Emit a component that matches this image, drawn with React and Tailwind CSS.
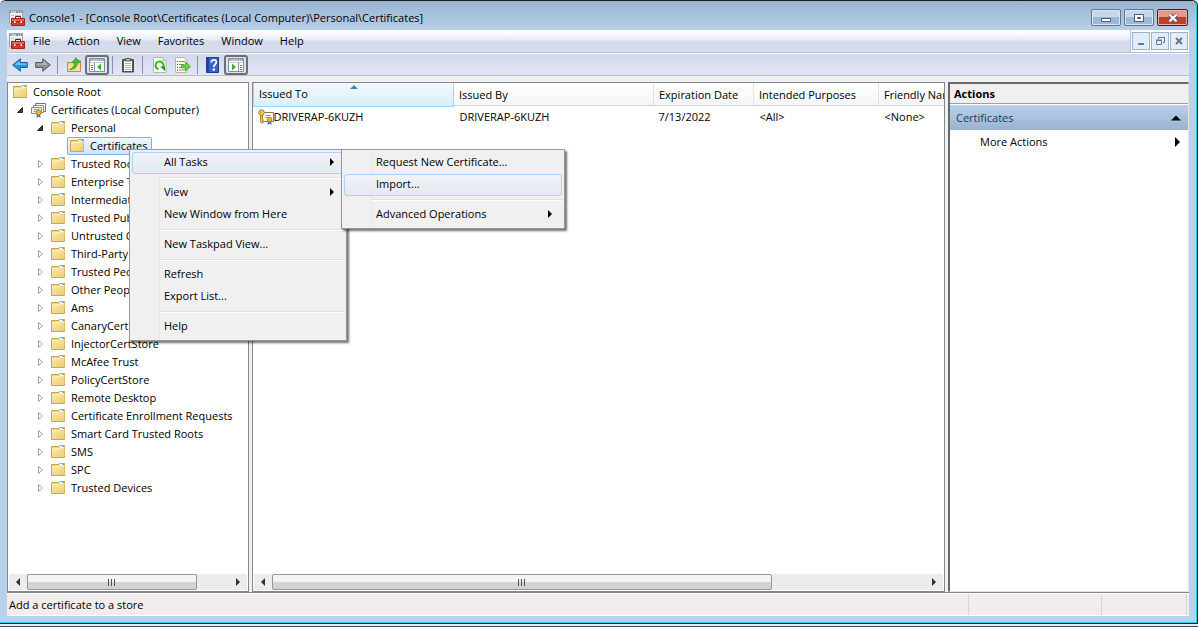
import React, { useState } from "react";
import clsx from "clsx";

const treeItems = [
    { label: "Console Root", level: 0 },
    { label: "Certificates (Local Computer)", level: 1, open: true, icon: "cert" },
    { label: "Personal", level: 2, open: true },
    { label: "Certificates", level: 3 },
    { label: "Trusted Root Certification Authorities", level: 2 },
    { label: "Enterprise Trust", level: 2 },
    { label: "Intermediate Certification Authorities", level: 2 },
    { label: "Trusted Publishers", level: 2 },
    { label: "Untrusted Certificates", level: 2 },
    { label: "Third-Party Root Certification Authorities", level: 2 },
    { label: "Trusted People", level: 2 },
    { label: "Other People", level: 2 },
    { label: "Ams", level: 2 },
    { label: "CanaryCertStore", level: 2 },
    { label: "InjectorCertStore", level: 2 },
    { label: "McAfee Trust", level: 2 },
    { label: "PolicyCertStore", level: 2 },
    { label: "Remote Desktop", level: 2 },
    { label: "Certificate Enrollment Requests", level: 2 },
    { label: "Smart Card Trusted Roots", level: 2 },
    { label: "SMS", level: 2 },
    { label: "SPC", level: 2 },
    { label: "Trusted Devices", level: 2 },
];

const indents = ["pl-0.5", "pl-2", "pl-7", "pl-[59px]"];

const contextMenu = [
    ["All Tasks"],
    ["View", "New Window from Here"],
    ["New Taskpad View..."],
    ["Refresh", "Export List..."],
    ["Help"],
];

const tasksMenu = [["Request New Certificate...", "Import..."], ["Advanced Operations"]];

const withArrow = ["All Tasks", "View", "Advanced Operations"];

function FolderIcon() {
    return (
        <svg className="w-4 h-4 shrink-0" viewBox="0 0 16 16">
            <defs>
                <linearGradient id="folder" x1="0" y1="0" x2="1" y2="1">
                    <stop offset="0" stopColor="#fbe9a9" />
                    <stop offset="1" stopColor="#eecb74" />
                </linearGradient>
            </defs>
            <path d="M.5 2.500h7l1-1h5v12h-13z" fill="#f0d383" stroke="#cfa24c" />
            <path d="M9 2h4v1.500H9z" fill="#fff" />
            <path d="M11.500 2H13v1h-1.500z" fill="#5b9bd5" />
            <path d="M1 4.500h7l1-1h4.500V13H1z" fill="url(#folder)" />
            <path d="M1 4.700h7l1-1h4.500" fill="none" stroke="#fff8d8" strokeWidth=".8" />
        </svg>
    );
}

function CertStoreIcon() {
    return (
        <svg className="w-4 h-4 shrink-0" viewBox="0 0 16 16">
            <path d="M4.500 1.500h10v8h-10z" fill="#fff" stroke="#77715f" />
            <path d="M2.500 3.500h10v7h-10z" fill="#fff" stroke="#8a8a8a" />
            <path d="M.5 5.500h10v6H.5z" fill="#f4f5fb" stroke="#8c8c8c" />
            <path d="M2.500 7.500h6M2.500 9.500h3" stroke="#8a92c8" />
            <path d="M6 11l-.5 5 2-1.500L9.500 16 9 11z" fill="#2f6fd0" />
            <circle cx="7.500" cy="10.500" r="2.500" fill="#f5b42c" stroke="#b97a10" strokeWidth=".8" />
        </svg>
    );
}

function CertKeyIcon() {
    return (
        <svg className="w-4 h-4 shrink-0" viewBox="0 0 16 16">
            <path d="M4.500 3.500h11v9h-11z" fill="#fff" stroke="#8a7550" />
            <path d="M7 6.500h6M7 8.500h3" stroke="#9298d0" />
            <path d="M10 11l-.5 5 2-1.500 2 1.500-.5-5z" fill="#2f6fd0" />
            <circle cx="11.500" cy="10.500" r="2.400" fill="#f5b42c" stroke="#b97a10" strokeWidth=".8" />
            <path d="M2.500 5v8l1.500 1.500L5.500 13l-1-1 1-1-1-1V5z" fill="#f3c35c" stroke="#a8721c" strokeWidth=".8" />
            <circle cx="3.500" cy="3.500" r="2.800" fill="#f8cd6e" stroke="#a8721c" strokeWidth=".9" />
            <circle cx="3.200" cy="2.800" r="1" fill="#fff" stroke="#a8721c" strokeWidth=".5" />
        </svg>
    );
}

function ConsoleIcon() {
    return (
        <svg className="w-4 h-4 shrink-0" viewBox="0 0 16 16">
            <path d="M.5.5h13v13H.5z" fill="#eef2f5" stroke="#98a3ad" />
            <path d="M1 1h12v2H1z" fill="#7f8c98" />
            <path d="M2 2h5M9 2h1M11 2h1" stroke="#fff" />
            <path d="M2 5h3v1H2zM6 5h6v1H6zM2 7.500h2v1H2z" fill="#b4bec7" />
            <path d="M6.500 8V6.500h5V8" fill="none" stroke="#5a2320" />
            <path d="M2.500 8.500h13v7h-13z" fill="#d8372e" stroke="#a8211c" />
            <path d="M3 9h12v2H3z" fill="#ea6558" />
            <path d="M3 11.500h12" stroke="#a8211c" />
            <path d="M5 11h1.500v2H5zM11.500 11H13v2h-1.500z" fill="#f2eae6" />
        </svg>
    );
}

function ArrowIcon({ forward }) {
    return (
        <svg className="w-4 h-4" viewBox="0 0 16 16">
            {forward ? (
                <>
                    <path d="M.7 5.500h7V1.800L15.300 8l-7.600 6.200v-3.700h-7z" fill="#8e9195" stroke="#55585c" />
                    <path d="M1.500 6.500h7V4l4.500 3.700H1.500z" fill="#b4b7ba" />
                </>
            ) : (
                <>
                    <path d="M15.300 5.500h-7V1.800L.7 8l7.600 6.200v-3.700h7z" fill="#2496e0" stroke="#17609e" />
                    <path d="M14.500 6.500h-7V4L3 7.700h11.500z" fill="#7fd0f8" />
                </>
            )}
        </svg>
    );
}

function UpFolderIcon() {
    return (
        <svg className="w-4 h-4" viewBox="0 0 16 16">
            <path d="M1.500 5.500h5l1.500-2h6.500v11h-13z" fill="#f1cf79" stroke="#bd9140" />
            <path d="M2 7.500h12v6.500H2z" fill="#f9e197" />
            <path d="M3.500 12.500c3.500-1 5-3.500 5-7H6.200L10 .8l4 4.700h-2.500c-.3 4.500-3 7-8 7z" fill="#4cc335" stroke="#238a1c" strokeWidth=".7" />
        </svg>
    );
}

function PaneIcon({ right }) {
    return (
        <svg className="w-4 h-4" viewBox="0 0 16 16">
            <path d="M.5 1.500h15v13H.5z" fill="#fff" stroke="#858e98" />
            <path d="M1 2h14v2H1z" fill="#8f9ba6" />
            <path d="M2 3h8" stroke="#dde3e8" />
            <path d="M11 3h1M13 3h1" stroke="#fff" />
            <path d="M1 5.500h14" stroke="#c3cad0" />
            {right ? (
                <>
                    <path d="M10.500 6v8" stroke="#858e98" />
                    <path d="M12 8.500h2M12 10.500h2M12 12.500h2" stroke="#4f82b8" />
                    <path d="M4 6.500v7L8 10z" fill="#35b128" />
                </>
            ) : (
                <>
                    <path d="M5.500 6v8" stroke="#858e98" />
                    <path d="M2 8.500h2M2 10.500h2M2 12.500h2" stroke="#4f82b8" />
                    <path d="M12 6.500v7L8 10z" fill="#35b128" />
                </>
            )}
        </svg>
    );
}

function ClipboardIcon() {
    return (
        <svg className="w-4 h-4" viewBox="0 0 16 16">
            <path d="M2.500 2.500h11v12.500h-11z" fill="#5d5d5d" stroke="#4d4d4d" />
            <path d="M4 4h8v10H4z" fill="#fff" />
            <path d="M5 6.500h6M5 8.500h6M5 10.500h6M5 12.500h6" stroke="#aab4bd" />
            <path d="M5.500 1.500h5v2.500h-5z" fill="#bdbdbd" stroke="#555" />
        </svg>
    );
}

function RefreshIcon() {
    return (
        <svg className="w-4 h-4" viewBox="0 0 16 16">
            <path d="M1.500.5h9.500l3 3v12H1.500z" fill="#fafbf5" stroke="#b5b7a8" />
            <path d="M11 .5v3h3" fill="#e2e4d6" stroke="#b5b7a8" />
            <path d="M6.500 12.300a4 4 0 1 1 4.200-1.300" fill="none" stroke="#35b52c" strokeWidth="2" />
            <path d="M8 9.500h5v4.500z" fill="#249c20" />
        </svg>
    );
}

function ExportIcon() {
    return (
        <svg className="w-4 h-4" viewBox="0 0 16 16">
            <path d="M.5.5h8.500l3 3v12H.5z" fill="#fffdf0" stroke="#c0b895" />
            <path d="M2 4.500h1M2 7.500h1M2 10.500h1M2 13h1" stroke="#555" />
            <path d="M4 4.500h6M4 7.500h5M4 10.500h4M4 13h6" stroke="#8a8a80" />
            <path d="M6.500 8h4V5l5 4.500-5 4.500v-3h-4z" fill="#6ed34c" stroke="#36a128" strokeWidth=".8" />
        </svg>
    );
}

function HelpIcon() {
    return (
        <svg className="w-4 h-4" viewBox="0 0 16 16">
            <path d="M1.500.5h12v15h-12z" fill="#3565c8" stroke="#1d3c8c" />
            <path d="M2 1h2v14H2z" fill="#1f459e" />
            <path d="M6.300 5.500c0-3.500 5-3.200 5-.2 0 2-2.500 2.200-2.500 4.700" fill="none" stroke="#fff" strokeWidth="1.800" />
            <circle cx="8.800" cy="12.500" r="1.200" fill="#fff" />
        </svg>
    );
}

function Triangle({ className, dir = "right" }) {
    const shapes = {
        right: "M2 0v8l4-4z",
        left: "M6 0v8L2 4z",
        up: "M0 6h8L4 2z",
    };
    return (
        <svg className={clsx("w-2 h-2 shrink-0", className)} viewBox="0 0 8 8">
            <path d={shapes[dir]} fill="currentColor" />
        </svg>
    );
}

function Expander({ open }) {
    return (
        <svg className="w-2 h-2 shrink-0" viewBox="0 0 8 8">
            {open ? (
                <path d="M6.500 1.500v5h-5z" fill="#404040" stroke="#262626" />
            ) : (
                <path d="M2.500.5v7l4-3.500z" fill="#fff" stroke="#a0a0a0" />
            )}
        </svg>
    );
}

function TitleBar() {
    const button =
        "h-[17px] flex items-center justify-center rounded-[2px] border border-[#5c7590] bg-linear-to-b from-[#c6d9ec] from-45% to-[#9db9d6] to-50% shadow-[inset_0_0_0_1px_#d9e6f3]";
    return (
        <header className="h-[29px] flex items-center pt-1 pl-[2px] pr-px shrink-0">
            <ConsoleIcon />
            <h1 className="ml-1 flex-1 truncate">
                Console1 - [Console Root\Certificates (Local Computer)\Personal\Certificates]
            </h1>
            <div className="flex gap-[3px]">
                <button aria-label="Minimize" className={clsx(button, "w-[30px]")}>
                    <svg className="w-3 h-3" viewBox="0 0 12 12">
                        <path d="M1.500 6.500h9v3h-9z" fill="#fff" stroke="#535666" />
                    </svg>
                </button>
                <button aria-label="Maximize" className={clsx(button, "w-[30px]")}>
                    <svg className="w-3 h-3" viewBox="0 0 12 12">
                        <path d="M1.500 2.500h9v7h-9z" fill="#fff" stroke="#535666" />
                        <path d="M4.500 5.500h3v1h-3z" fill="#8da4bc" stroke="#535666" />
                    </svg>
                </button>
                <button
                    aria-label="Close"
                    className="w-[31px] h-[17px] flex items-center justify-center rounded-[2px] border border-[#531b22] bg-linear-to-b from-[#e39a8c] from-45% to-[#c13e28] to-50% shadow-[inset_0_0_0_1px_#eab1a5]"
                >
                    <svg className="w-3 h-3" viewBox="0 0 12 12">
                        <path d="M2.500 2.500l7 7M9.500 2.500l-7 7" stroke="#535666" strokeWidth="4" />
                        <path d="M2.500 2.500l7 7M9.500 2.500l-7 7" stroke="#fff" strokeWidth="2.400" />
                    </svg>
                </button>
            </div>
        </header>
    );
}

function MenuBar() {
    const child =
        "w-[18px] h-[18px] flex items-center justify-center border border-[#9db3c8] bg-[#e1eefa] text-[#67788a]";
    return (
        <div className="h-[23px] flex items-center shrink-0 pl-[2px] border-b border-[#b6bccc] bg-linear-to-b from-white from-10% via-[#e6eaf5] via-45% to-[#d5daed] to-50%">
            <ConsoleIcon />
            <nav className="flex flex-1">
                {["File", "Action", "View", "Favorites", "Window", "Help"].map((name) => (
                    <button key={name} className="pl-2 pr-[9px]">
                        {name}
                    </button>
                ))}
            </nav>
            <div className="h-full flex items-center gap-px pl-px pr-px border-l border-[#b6bccc] bg-white">
                <button aria-label="Minimize console" className={child}>
                    <svg className="w-3 h-3" viewBox="0 0 12 12">
                        <path d="M3 9h6" stroke="currentColor" strokeWidth="2" />
                    </svg>
                </button>
                <button aria-label="Restore console" className={child}>
                    <svg className="w-3 h-3" viewBox="0 0 12 12">
                        <path d="M4.500 4V2.500h6v5H9M4 2.500h7" fill="none" stroke="currentColor" />
                        <path d="M2.500 5.500h5v4h-5zM2 5h6" fill="none" stroke="currentColor" />
                    </svg>
                </button>
                <button aria-label="Close console" className={child}>
                    <svg className="w-3 h-3" viewBox="0 0 12 12">
                        <path d="M3 3l6 6M9 3l-6 6" stroke="currentColor" strokeWidth="2" />
                    </svg>
                </button>
            </div>
        </div>
    );
}

function ToolButton({ label, pressed, children }) {
    return (
        <button
            aria-label={label}
            className={clsx(
                "h-5 flex items-center justify-center",
                pressed ? "w-6 rounded-[3px] border-2 border-[#6b6f7a] bg-[#dfe3ee]" : "w-[23px]"
            )}
        >
            {children}
        </button>
    );
}

function ToolBar() {
    const divider = <span className="w-px h-[18px] mx-[3px] bg-[#8d92a3]" />;
    return (
        <div className="h-[23px] flex items-center shrink-0 pl-px pt-px border-t border-b border-t-white border-b-[#b6bccc] bg-linear-to-b from-[#d3d9ed] to-[#e1e6f6]">
            <ToolButton label="Back"><ArrowIcon /></ToolButton>
            <ToolButton label="Forward"><ArrowIcon forward /></ToolButton>
            {divider}
            <span className="w-px" />
            <ToolButton label="Up one level"><UpFolderIcon /></ToolButton>
            <ToolButton label="Show/Hide Console Tree" pressed><PaneIcon /></ToolButton>
            {divider}
            <ToolButton label="Paste"><ClipboardIcon /></ToolButton>
            {divider}
            <span className="w-0.5" />
            <ToolButton label="Refresh"><RefreshIcon /></ToolButton>
            <ToolButton label="Export List"><ExportIcon /></ToolButton>
            {divider}
            <ToolButton label="Help"><HelpIcon /></ToolButton>
            <ToolButton label="Show/Hide Action Pane" pressed><PaneIcon right /></ToolButton>
        </div>
    );
}

function ScrollBar({ thumb }) {
    return (
        <div className="h-4 flex items-stretch shrink-0 mx-px mb-px bg-[#ececec] text-[#303030]">
            <button aria-label="Scroll left" className="w-[18px] flex items-center justify-center">
                <Triangle dir="left" />
            </button>
            <div className="flex-1">
                <div
                    className={clsx(
                        "h-4 flex items-center justify-center gap-px border border-[#979797] rounded-[2px] bg-linear-to-b from-[#f4f4f4] from-45% to-[#d2d2d5] to-55%",
                        thumb
                    )}
                >
                    <span className="w-0.5 h-[7px] border-l border-[#505050]" />
                    <span className="w-0.5 h-[7px] border-l border-[#505050]" />
                    <span className="w-0.5 h-[7px] border-l border-[#505050]" />
                </div>
            </div>
            <button aria-label="Scroll right" className="w-[18px] flex items-center justify-center">
                <Triangle />
            </button>
        </div>
    );
}

function TreePane({ selected, onSelect }) {
    return (
        <section className="w-[242px] shrink-0 flex flex-col border border-[#828790] bg-white">
            <ul className="flex-1 overflow-hidden">
                {treeItems.map((item, index) => (
                    <li key={`${item.level}-${item.label}`} className={clsx("h-[18px] flex items-center", indents[item.level])}>
                        {(item.level === 1 || item.level === 2) && (
                            <span className="w-3 flex shrink-0">
                                <Expander open={item.open} />
                            </span>
                        )}
                        <button
                            onClick={() => onSelect(index)}
                            className={clsx(
                                "h-[18px] flex items-center gap-1 pl-0.5 pr-[3px] whitespace-nowrap rounded-[2px] border",
                                selected === index
                                    ? "border-[#84acdd] bg-linear-to-b from-[#f1f7fe] to-[#cfe3fb]"
                                    : "border-transparent"
                            )}
                        >
                            {item.icon === "cert" ? <CertStoreIcon /> : <FolderIcon />}
                            {item.label}
                        </button>
                    </li>
                ))}
            </ul>
            <ScrollBar thumb="w-[170px]" />
        </section>
    );
}

function ListPane() {
    const head = "h-[23px] px-[5px] text-left font-normal border-r border-[#dfe3e8]";
    return (
        <section className="flex-1 min-w-0 flex flex-col border border-[#828790] bg-white">
            <div className="flex-1 overflow-hidden">
                <table className="w-full table-fixed whitespace-nowrap">
                    <colgroup>
                        <col className="w-[200px]" />
                        <col className="w-[200px]" />
                        <col className="w-[100px]" />
                        <col className="w-[125px]" />
                        <col />
                    </colgroup>
                    <thead>
                        <tr className="bg-linear-to-b from-white to-[#f4f5f7] shadow-[inset_0_-1px_0_#d5d5d5]">
                            <th className="relative h-[23px] px-[5px] text-left font-normal border border-t-0 border-[#96d9f9] bg-linear-to-b from-[#f2f9fc] to-[#d9eef9]">
                                Issued To
                                <Triangle dir="up" className="absolute top-0 left-1/2 -translate-x-1/2 text-[#4d87ab]" />
                            </th>
                            <th className={head}>Issued By</th>
                            <th className={head}>Expiration Date</th>
                            <th className={head}>Intended Purposes</th>
                            <th className="h-[23px] pl-[5px] text-left font-normal overflow-hidden">Friendly Name</th>
                        </tr>
                    </thead>
                    <tbody>
                        <tr className="h-[22px]">
                            <td className="pl-1">
                                <span className="flex items-center">
                                    <CertKeyIcon />
                                    DRIVERAP-6KUZH
                                </span>
                            </td>
                            <td className="px-[6px]">DRIVERAP-6KUZH</td>
                            <td className="px-[5px]">7/13/2022</td>
                            <td className="px-[6px]">&lt;All&gt;</td>
                            <td className="px-[6px]">&lt;None&gt;</td>
                        </tr>
                    </tbody>
                </table>
            </div>
            <ScrollBar thumb="w-[500px]" />
        </section>
    );
}

function ActionsPane() {
    return (
        <aside className="w-[241px] shrink-0 border-t-2 border-l-2 border-r border-b border-t-[#696969] border-l-[#696969] border-r-[#e3e3e3] border-b-[#e3e3e3] bg-white">
            <h2 className="h-5 flex items-center px-1 font-bold border-b border-[#a0a0a0] bg-[#f0f0f0]">Actions</h2>
            <button className="mt-px w-full h-[25px] flex items-center justify-between pl-[6px] pr-[7px] text-[#1e395b] bg-linear-to-b from-[#b9d1ea] to-[#99b4d1]">
                Certificates
                <svg className="w-[10px] h-[10px] text-black" viewBox="0 0 10 10">
                    <path d="M0 7.500h10L5 2.500z" fill="currentColor" />
                </svg>
            </button>
            <button className="w-full h-6 flex items-center justify-between pl-[30px] pr-[6px]">
                More Actions
                <svg className="w-[10px] h-[10px]" viewBox="0 0 10 10">
                    <path d="M3 0v10l5-5z" fill="currentColor" />
                </svg>
            </button>
        </aside>
    );
}

function PopupMenu({ groups, active, className }) {
    return (
        <div
            role="menu"
            className={clsx(
                "absolute border border-[#979797] bg-[#f0f0f0] p-[2px] shadow-[2px_2px_2px_rgba(0,0,0,0.55)]",
                className
            )}
        >
            <div className="bg-linear-to-r from-transparent from-[27px] via-[#e0e0e0] via-[27px] to-transparent to-[28px]">
                {groups.map((group, index) => (
                    <div key={group[0]}>
                        {index > 0 && (
                            <div className="h-2 flex items-center pl-7">
                                <hr className="flex-1 h-0.5 border-t border-b border-t-[#e0e0e0] border-b-white" />
                            </div>
                        )}
                        {group.map((name) => (
                            <button
                                key={name}
                                role="menuitem"
                                className={clsx(
                                    "w-full h-[22px] flex items-center justify-between pl-[31px] pr-[7px] pb-0.5 border rounded-[3px]",
                                    name === active
                                        ? "border-[#aecff7] bg-linear-to-b from-[#f0f3f8]/70 to-[#dfe8f4]/70"
                                        : "border-transparent"
                                )}
                            >
                                {name}
                                {withArrow.includes(name) && <Triangle />}
                            </button>
                        ))}
                    </div>
                ))}
            </div>
        </div>
    );
}

function StatusBar() {
    return (
        <footer className="h-[23px] flex items-stretch shrink-0 border-y border-white bg-[#f0edec]">
            <p className="flex-1 flex items-center pl-[2px] pt-px">Add a certificate to a store</p>
            <span className="w-[133px] border-l border-[#d7d4d4]" />
            <span className="w-[86px] mr-[2px] border-x border-[#d7d4d4]" />
        </footer>
    );
}

function App() {
    const [selected, setSelected] = useState(3);

    return (
        <div className="min-h-screen flex flex-col bg-white pr-px pb-px font-['Open_Sans','Noto_Sans',sans-serif] text-[11px] leading-4 text-black">
            <div className="relative flex-1 flex flex-col border-b border-[#4c4c55] bg-[#dfe9f3] pb-[2px]">
                <div className="flex-1 flex flex-col rounded-t-[6px] border-t border-r border-b border-[#1b1b20] bg-[#b9d1ea]">
                    <div className="flex-1 flex flex-col px-[7px] pb-[6px] rounded-t-[6px] border-r border-b border-[#2fc7e6] bg-linear-to-b from-[#99b4d1] to-[#b9d1ea] to-[30px]">
                        <TitleBar />
                        <MenuBar />
                        <ToolBar />
                        <main className="flex-1 flex gap-[3px] pt-[6px] bg-[#f0f0f0] border-b border-[#828790]">
                            <TreePane selected={selected} onSelect={setSelected} />
                            <ListPane />
                            <ActionsPane />
                        </main>
                        <StatusBar />
                    </div>
                </div>
                <PopupMenu groups={contextMenu} active="All Tasks" className="top-[149px] left-[129px] w-[218px]" />
                <PopupMenu groups={tasksMenu} active="Import..." className="top-[149px] left-[341px] w-[224px]" />
            </div>
        </div>
    );
}

export default App;
